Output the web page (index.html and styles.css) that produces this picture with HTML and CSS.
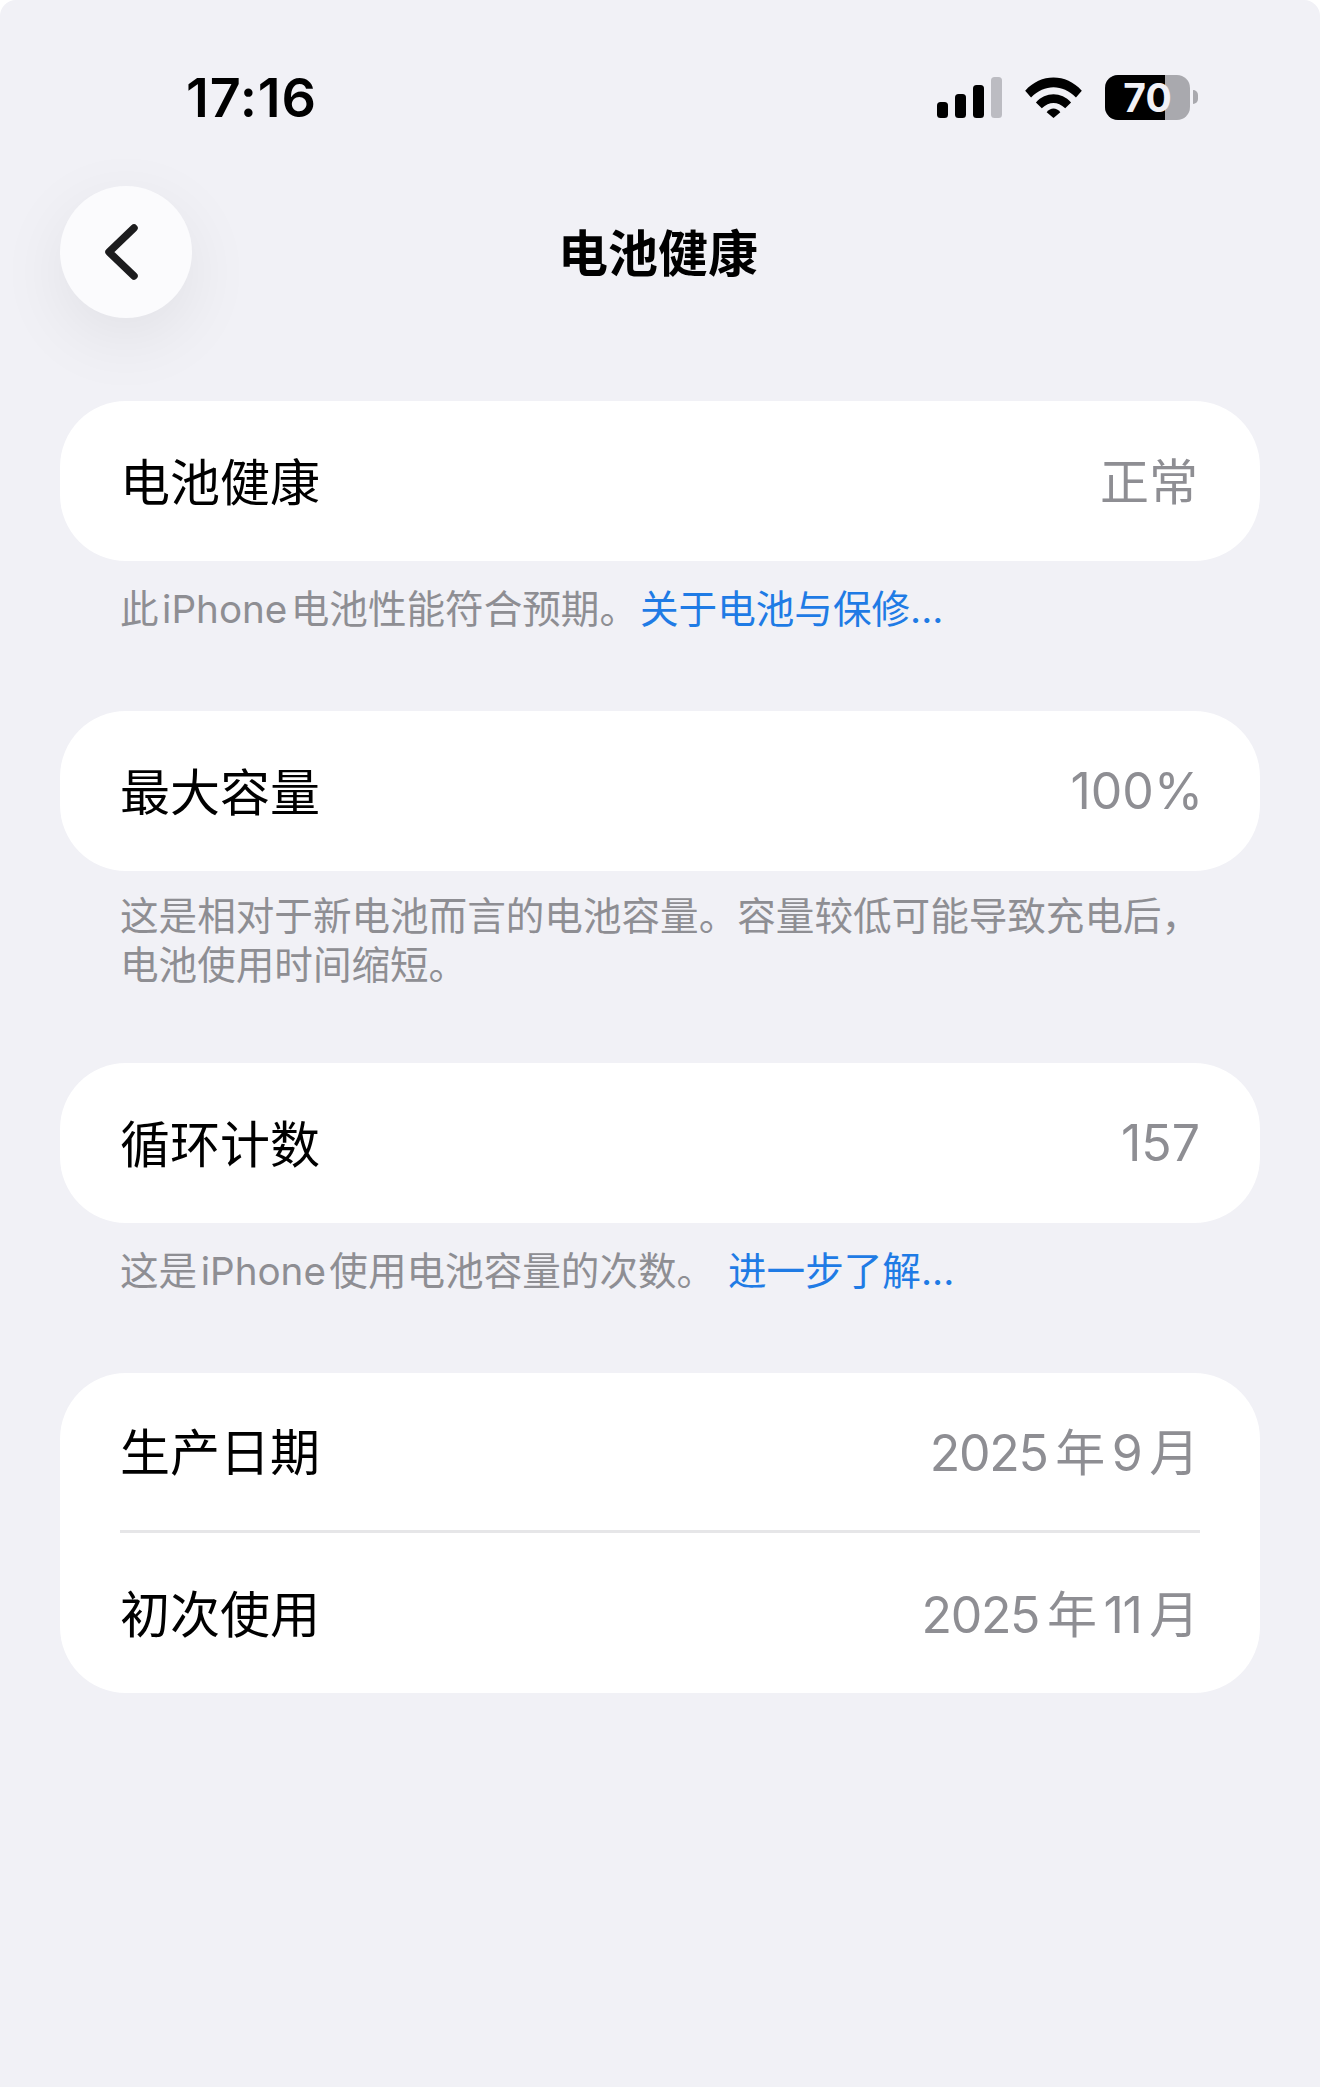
FILE: index.html
```html
<!DOCTYPE html>
<html lang="zh-CN">
<head>
  <meta charset="UTF-8">
  <meta name="viewport" content="width=device-width, initial-scale=1.0">
  <title>电池健康</title>
  <link rel="stylesheet" href="styles.css">
</head>
<body>
<div class="screen">
  <div class="status-bar">
    <span class="time">17:16</span>
    <div class="status-icons">
      <svg class="signal" width="65" height="41" viewBox="0 0 65 41">
        <rect x="0" y="25" width="11" height="16" rx="3.5" fill="#000"/>
        <rect x="18" y="17" width="11" height="24" rx="3.5" fill="#000"/>
        <rect x="36" y="8" width="11" height="33" rx="3.5" fill="#000"/>
        <rect x="54" y="0" width="11" height="41" rx="3.5" fill="#bcbcc2"/>
      </svg>
      <svg class="wifi" width="57" height="41" viewBox="0 0 58 42">
        <path d="M0 14 C16 -4 42 -4 58 14 L52 21 C38 7 20 7 6 21 Z" fill="#000"/>
        <path d="M11 26 C21 15 37 15 47 26 L41 32 C33 25 25 25 17 32 Z" fill="#000"/>
        <path d="M22 36 C26 31 32 31 36 36 L29 42 Z" fill="#000"/>
      </svg>
      <div class="battery">
        <div class="battery-body">
          <div class="battery-fill"></div>
          <span class="battery-num">70</span>
        </div>
        <span class="battery-tip"></span>
      </div>
    </div>
  </div>

  <div class="nav">
    <button type="button" class="back">
      <svg width="33" height="56" viewBox="0 0 33 56">
        <path d="M29 4 L4 28 L29 52" fill="none" stroke="#1c1c1e" stroke-width="7.5" stroke-linecap="round" stroke-linejoin="round"/>
      </svg>
    </button>
    <h1>电池健康</h1>
  </div>

  <div class="content">
    <div class="card">
      <div class="row"><span class="label">电池健康</span><span class="value value-cjk">正常</span></div>
    </div>
    <p class="note">此&hairsp;iPhone&hairsp;电池性能符合预期。<a href="#">关于电池与保修...</a></p>

    <div class="card">
      <div class="row"><span class="label">最大容量</span><span class="value value-num value-pct">100%</span></div>
    </div>
    <p class="note note-long">这是相对于新电池而言的电池容量。容量较低可能导致充电后，<br>电池使用时间缩短。</p>

    <div class="card">
      <div class="row"><span class="label">循环计数</span><span class="value value-num">157</span></div>
    </div>
    <p class="note">这是&hairsp;iPhone&hairsp;使用电池容量的次数。 <a href="#">进一步了解...</a></p>

    <div class="card card-double">
      <div class="row"><span class="label">生产日期</span><span class="value value-date">2025&thinsp;年&thinsp;9&thinsp;月</span></div>
      <div class="divider"></div>
      <div class="row"><span class="label">初次使用</span><span class="value value-date">2025&thinsp;年&thinsp;11&thinsp;月</span></div>
    </div>
  </div>
</div>
</body>
</html>
```

FILE: styles.css
```css
html, body {
  margin: 0;
  height: 100%;
  background-color: #FFFFFF;
}
body {
  font-family: "Inter", "Noto Sans CJK SC", sans-serif;
  color: #000000;
}
.screen {
  min-height: 2087px;
  box-sizing: border-box;
  background-color: #F1F1F6;
  border-radius: 16px 16px 0 0;
}
.status-bar {
  display: flex;
  justify-content: space-between;
  align-items: center;
  height: 68px;
  padding: 63px 122px 0 186px;
}
.time {
  font-size: 54px;
  font-weight: 600;
  letter-spacing: 0.8px;
}
.status-icons {
  display: flex;
  align-items: center;
  gap: 23px;
}
.battery {
  display: flex;
  align-items: center;
  gap: 3px;
}
.battery-body {
  position: relative;
  width: 85px;
  height: 45px;
  border-radius: 13px;
  background-color: #A9A9AE;
  overflow: hidden;
}
.battery-fill {
  width: 60px;
  height: 100%;
  background-color: #000000;
}
.battery-num {
  position: absolute;
  top: 0;
  left: 0;
  width: 85px;
  text-align: center;
  font-size: 39px;
  line-height: 45px;
  font-weight: 700;
  color: #F1F1F6;
}
.battery-tip {
  width: 5px;
  height: 14px;
  border-radius: 0 5px 5px 0;
  background-color: #A9A9AE;
}
.nav {
  position: relative;
  display: flex;
  justify-content: center;
  align-items: center;
  height: 132px;
  margin-top: 55px;
}
.back {
  position: absolute;
  left: 60px;
  top: 0;
  display: flex;
  justify-content: center;
  align-items: center;
  width: 132px;
  height: 132px;
  padding: 0 9px 0 0;
  border: none;
  border-radius: 50%;
  background-color: #FBFBFD;
  box-shadow: 0 20px 70px rgba(0, 0, 0, 0.07);
}
h1 {
  margin: 0;
  padding: 0 4px 4px 0;
  font-size: 50px;
  font-weight: 600;
}
.content {
  padding: 83px 60px 0;
}
.card {
  background-color: #FFFFFF;
  border-radius: 66px;
}
.row {
  display: flex;
  justify-content: space-between;
  align-items: center;
  height: 160px;
  padding: 0 60px;
  font-size: 50px;
}
.card-double .row:first-child {
  height: 157px;
}
.label, .value {
  padding-bottom: 5px;
}
.value {
  color: #8E8E93;
}
.value-cjk {
  font-size: 49px;
  padding-right: 2px;
}
.value-num {
  padding-bottom: 0;
}
.value-pct {
  margin-right: -3px;
}
.value-date {
  padding-right: 2px;
  letter-spacing: -1.3px;
}
.divider {
  height: 3px;
  margin: 0 60px;
  background-color: #E6E6E8;
}
.note {
  margin: 0;
  padding: 24px 0 77px 60px;
  font-size: 38.6px;
  line-height: 49px;
  color: #8E8E93;
}
.note-long {
  padding-top: 21px;
  padding-bottom: 73px;
}
.note a {
  margin-left: 2px;
  color: #1F7BE5;
  text-decoration: none;
}
```
